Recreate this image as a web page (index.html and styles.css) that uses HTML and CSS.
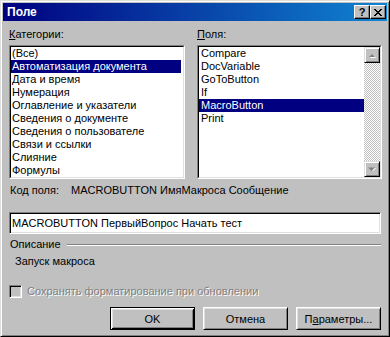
FILE: index.html
```html
<!DOCTYPE html>
<html lang="ru">
<head>
  <meta charset="UTF-8">
  <title>Поле</title>
  <link rel="stylesheet" href="styles.css">
</head>
<body>
  <div class="window">
    <div class="titlebar">
      <span class="title">Поле</span>
      <span class="tb-btn help">?</span>
      <span class="tb-btn">
        <svg width="8" height="7" viewBox="0 0 8 7"><path d="M0 0h2v1h1v1h2v-1h1v-1h2v1h-1v1h-1v1h-1v1h1v1h1v1h1v1h-2v-1h-1v-1h-2v1h-1v1h-2v-1h1v-1h1v-1h1v-1h-1v-1h-1v-1h-1z" fill="#000"/></svg>
      </span>
    </div>

    <div class="client">
      <div class="lists">
        <div class="col col-left">
          <div class="label"><u>К</u>атегории:</div>
          <div class="listbox">
            <div class="list-inner">
              <div class="rows">
                <div class="row">(Все)</div>
                <div class="row selected">Автоматизация документа</div>
                <div class="row">Дата и время</div>
                <div class="row">Нумерация</div>
                <div class="row">Оглавление и указатели</div>
                <div class="row">Сведения о документе</div>
                <div class="row">Сведения о пользователе</div>
                <div class="row">Связи и ссылки</div>
                <div class="row">Слияние</div>
                <div class="row">Формулы</div>
              </div>
            </div>
          </div>
        </div>
        <div class="col col-right">
          <div class="label"><u>П</u>оля:</div>
          <div class="listbox">
            <div class="list-inner">
              <div class="rows">
                <div class="row">Compare</div>
                <div class="row">DocVariable</div>
                <div class="row">GoToButton</div>
                <div class="row">If</div>
                <div class="row selected">MacroButton</div>
                <div class="row">Print</div>
              </div>
              <div class="scrollbar">
                <span class="sb-btn">
                  <svg width="8" height="5" viewBox="0 0 8 5"><path d="M4 1l3 3h-6z" fill="#fff" transform="translate(1 1)"/><path d="M4 0l3 3h-6z" fill="#808080" transform="translate(0 1)"/></svg>
                </span>
                <span class="sb-btn">
                  <svg width="8" height="5" viewBox="0 0 8 5"><path d="M1 1h6l-3 3z" fill="#fff" transform="translate(1 0)"/><path d="M0 0h7l-3.5 3.5z" fill="#808080" transform="translate(0 0.5)"/></svg>
                </span>
              </div>
            </div>
          </div>
        </div>
      </div>

      <div class="code-row">
        <span class="code-label">Ко<u>д</u> поля:</span>
        <span>MACROBUTTON ИмяМакроса Сообщение</span>
      </div>

      <div class="field">MACROBUTTON ПервыйВопрос Начать тест</div>

      <div class="group-head">
        <span>Описание</span>
        <span class="etched"></span>
      </div>
      <div class="description">Запуск макроса</div>

      <div class="check-row">
        <span class="checkbox"></span>
        <span class="disabled">Сохранять форматирование при обновлении</span>
      </div>

      <div class="buttons">
        <button class="btn default">OK</button>
        <button class="btn">Отмена</button>
        <button class="btn">П<u>а</u>раметры...</button>
      </div>
    </div>
  </div>
</body>
</html>
```

FILE: styles.css
```css
body {
  margin: 0;
  font-family: "Liberation Sans", Arial, sans-serif;
  font-size: 11px;
  color: #000;
  background: #c0c0c0;
}

.window {
  width: 390px;
  height: 337px;
  box-sizing: border-box;
  background: #c0c0c0;
  border: 1px solid;
  border-color: #dfdfdf #000 #000 #dfdfdf;
  box-shadow: inset 1px 1px #fff, inset -1px -1px #808080;
  padding: 2px;
  display: flex;
  flex-direction: column;
}

/* title bar */
.titlebar {
  height: 18px;
  flex-shrink: 0;
  display: flex;
  align-items: center;
  padding: 0 1px 0 4px;
  background: linear-gradient(to right, #000080, #1084d0);
  color: #fff;
  font-weight: bold;
  font-size: 12px;
}

.title {
  flex: 1;
}

.tb-btn {
  width: 16px;
  height: 14px;
  box-sizing: border-box;
  display: flex;
  align-items: center;
  justify-content: center;
  background: #c0c0c0;
  border: 1px solid;
  border-color: #fff #000 #000 #fff;
  box-shadow: inset -1px -1px #808080;
  color: #000;
}

.tb-btn.help {
  font-size: 11px;
  font-weight: bold;
  line-height: 12px;
}

/* client area */
.client {
  flex: 1;
  display: flex;
  flex-direction: column;
  padding: 7px 5px 0 6px;
}

.lists {
  display: flex;
  justify-content: space-between;
}

.col-left {
  width: 176px;
}

.col-right {
  width: 185px;
}

.label {
  height: 13px;
  line-height: 13px;
  margin-bottom: 4px;
}

.listbox {
  height: 134px;
  box-sizing: border-box;
  border: 1px solid;
  border-color: #808080 #fff #fff #808080;
}

.list-inner {
  height: 100%;
  box-sizing: border-box;
  border: 1px solid;
  border-color: #000 #dfdfdf #dfdfdf #000;
  background: #fff;
  display: flex;
  overflow: hidden;
}

.rows {
  flex: 1;
}

.col-left .rows {
  padding-right: 2px;
}

.row {
  height: 13px;
  line-height: 13px;
  padding-left: 1px;
  white-space: nowrap;
}

.col-right .row {
  padding-left: 2px;
}

.row.selected {
  background: #000080;
  color: #fff;
}

.scrollbar {
  width: 16px;
  display: flex;
  flex-direction: column;
  justify-content: space-between;
  background: repeating-conic-gradient(#c0c0c0 0 25%, #fff 0 50%) 0 0 / 2px 2px;
}

.sb-btn {
  width: 16px;
  height: 16px;
  box-sizing: border-box;
  display: flex;
  align-items: center;
  justify-content: center;
  background: #c0c0c0;
  border: 1px solid;
  border-color: #dfdfdf #000 #000 #dfdfdf;
  box-shadow: inset 1px 1px #fff, inset -1px -1px #808080;
}

.code-row {
  margin-top: 5px;
  height: 13px;
  line-height: 13px;
  padding-left: 1px;
}

.code-label {
  display: inline-block;
  width: 58px;
}

.field {
  margin-top: 15px;
  height: 22px;
  line-height: 20px;
  box-sizing: border-box;
  border: 1px solid;
  border-color: #808080 #fff #fff #808080;
  box-shadow: inset 1px 1px #000, inset -1px -1px #dfdfdf;
  background: #fff;
  padding-left: 2px;
  margin-right: 1px;
  white-space: nowrap;
}

.group-head {
  margin-top: 4px;
  height: 13px;
  line-height: 13px;
  display: flex;
  align-items: center;
  padding-left: 1px;
  margin-right: 1px;
}

.etched {
  flex: 1;
  margin-left: 6px;
  border-top: 1px solid #808080;
  border-bottom: 1px solid #fff;
}

.description {
  margin-top: 4px;
  height: 13px;
  line-height: 13px;
  padding-left: 6px;
}

.check-row {
  margin-top: 17px;
  height: 13px;
  line-height: 13px;
  display: flex;
  align-items: center;
}

.checkbox {
  width: 13px;
  height: 13px;
  box-sizing: border-box;
  border: 1px solid;
  border-color: #808080 #fff #fff #808080;
  box-shadow: inset 1px 1px #000, inset -1px -1px #dfdfdf;
  background: #c0c0c0;
  margin-right: 5px;
}

.disabled {
  color: #808080;
  text-shadow: 1px 1px #fff;
}

.buttons {
  margin-top: 9px;
  display: flex;
  justify-content: flex-end;
  gap: 8px;
  padding-right: 1px;
}

.btn {
  width: 85px;
  height: 23px;
  box-sizing: border-box;
  margin: 0;
  padding: 0;
  font: inherit;
  color: #000;
  background: #c0c0c0;
  border: 1px solid;
  border-color: #fff #000 #000 #fff;
  box-shadow: inset 1px 1px #dfdfdf, inset -1px -1px #808080;
}

.btn.default {
  border: 1px solid #000;
  box-shadow: inset 1px 1px #fff, inset -1px -1px #000, inset 2px 2px #dfdfdf, inset -2px -2px #808080;
}
```
